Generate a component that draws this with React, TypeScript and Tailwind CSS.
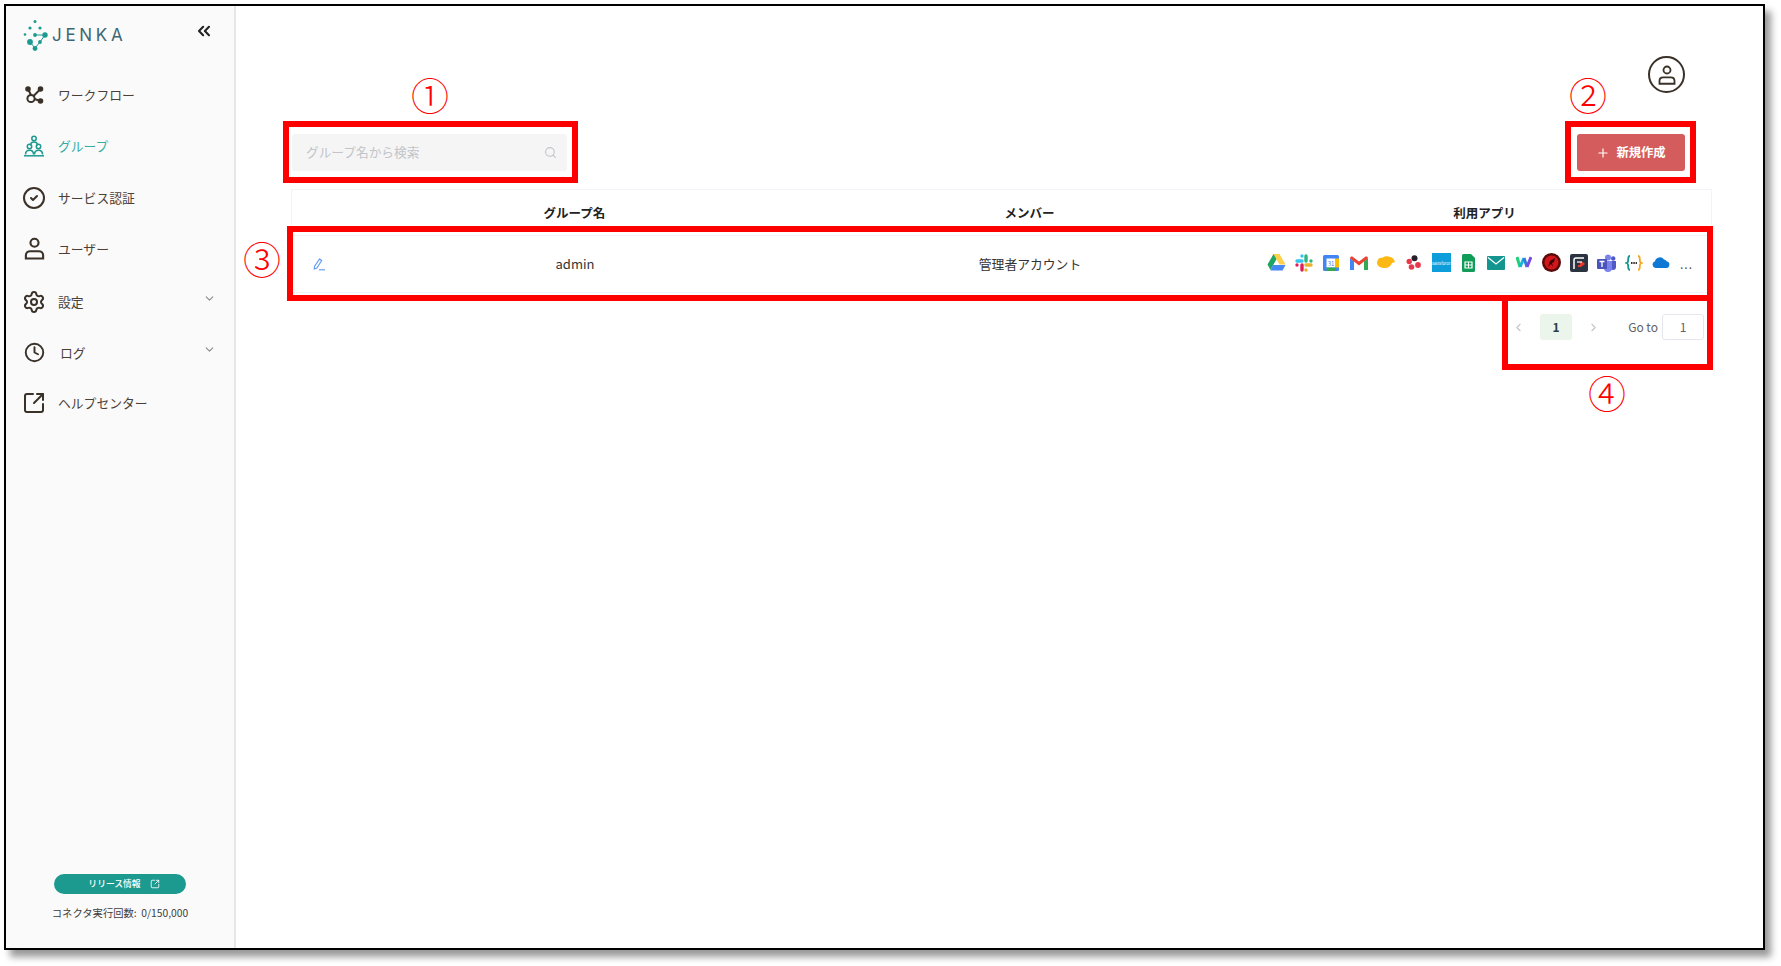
import { ChevronDown, ChevronLeft, ChevronRight, ChevronsLeft, CircleCheck, Clock, Plus, Search, Settings, SquareArrowOutUpRight } from "lucide-react";

const font = "font-['Noto_Sans_CJK_JP','Noto_Sans',sans-serif]";

function Logo() {
  return (
    <svg width="26" height="33" viewBox="-2 0 26 33" fill="#1c9a90">
      <path d="M5 22l5 6 5-6 5-7H10" stroke="#1c9a90" strokeWidth="1" fill="none" />
      <circle cx="10" cy="1.500" r="1.500" />
      <circle cx="5" cy="8" r="1.600" />
      <circle cx="15" cy="8" r="1.600" />
      <circle cx="0" cy="14.500" r="1.300" />
      <circle cx="10" cy="15" r="1.900" />
      <circle cx="20" cy="15" r="2.700" />
      <circle cx="5" cy="22" r="2.900" />
      <circle cx="15" cy="22" r="1.900" />
      <circle cx="10" cy="28.500" r="2.400" />
    </svg>
  );
}

function WorkflowIcon() {
  return (
    <svg width="20" height="20" viewBox="0 0 20 20" fill="none" stroke="#3a3128" strokeWidth="2">
      <circle cx="7" cy="13.500" r="3.600" />
      <circle cx="4" cy="4" r="1.800" fill="#3a3128" />
      <circle cx="16.500" cy="4" r="1.800" fill="#3a3128" />
      <circle cx="16.500" cy="16" r="1.800" fill="#3a3128" />
      <path d="M4 4l3 6M16.500 4l-7 7M10.500 14l6 2" />
    </svg>
  );
}

function GroupIcon() {
  return (
    <svg width="22" height="22" viewBox="0 0 22 22" fill="none" stroke="#1c9a90" strokeWidth="1.500">
      <circle cx="11" cy="3.500" r="2.200" />
      <path d="M7.500 10.500c0-2.500 1.500-3.600 3.500-3.600s3.500 1.100 3.500 3.600" />
      <circle cx="6.500" cy="11.500" r="2.200" />
      <circle cx="15.500" cy="11.500" r="2.200" />
      <path d="M2.500 19.500c0-3 1.600-4.300 4-4.300s4 1.300 4 4.300M11.500 19.500c0-3 1.600-4.300 4-4.300s4 1.300 4 4.300" />
      <path d="M1 20.800h20" />
    </svg>
  );
}

function UserIcon({ size = 23 }: { size?: number }) {
  return (
    <svg width={size} height={size} viewBox="0 0 22 24" fill="none" stroke="#3a3128" strokeWidth="2.200">
      <circle cx="11" cy="6" r="4.200" />
      <path d="M2 22.500v-3.500c0-2.500 2-4.200 4.500-4.200h9c2.500 0 4.500 1.700 4.500 4.200v3.500z" />
    </svg>
  );
}

function EditIcon() {
  return (
    <svg width="13" height="13" viewBox="0 0 13 13" fill="none" stroke="#5c98f2" strokeWidth="1.100">
      <path d="M6.500 1l2.200 1.500-4.800 7.500-2.700 1 .4-2.900z" />
      <path d="M6 11.800h6" />
    </svg>
  );
}

function NavItem({ icon, label, active, more, labelClass, className }: { icon: React.ReactNode; label: string; active?: boolean; more?: boolean; labelClass?: string; className?: string }) {
  return (
    <div className={`flex h-[51px] items-center pl-[16px] pr-[18px] ${className ?? ""}`}>
      <div className="flex h-[24px] w-[24px] items-center justify-center">{icon}</div>
      <span className={`text-[12.800px] ${labelClass ?? "ml-[12px]"} ${active ? "text-[#36ada3]" : "text-[#4a4038]"}`}>{label}</span>
      {more && <ChevronDown className="ml-auto mb-[7px] h-[13px] w-[13px] text-[#8a8a8a]" />}
    </div>
  );
}

const appIcons = [
  // drive
  <svg width="19" height="17" viewBox="0 0 19 17"><path d="M6.500 0h6l-6 10.500-3 5.500L.5 10.500z" fill="#1fa463" /><path d="M6.500 0h6l6 10.500h-6z" fill="#ffd04b" /><path d="M6 11h12.500l-3 5.500h-12z" fill="#4688f4" /></svg>,
  // slack
  <svg width="18" height="18" viewBox="0 0 18 18" strokeWidth="3.400" strokeLinecap="round"><path d="M7 2v0M7 7H2" stroke="#36c5f0" /><path d="M16 7v0M11 7V2" stroke="#2eb67d" /><path d="M11 16v0M11 11h5" stroke="#ecb22e" /><path d="M2 11v0M7 11v5" stroke="#e01e5a" /></svg>,
  // calendar
  <svg width="16" height="16" viewBox="0 0 16 16"><rect width="16" height="16" rx="1.500" fill="#4285f4" /><rect x="3.500" y="3.500" width="9" height="9" fill="#fff" /><path d="M12.500 3.500H16v9h-3.500z" fill="#fbbc04" /><path d="M3.500 12.500h9V16h-9z" fill="#34a853" /><text x="8" y="10.500" fontSize="6" textAnchor="middle" fill="#4285f4">31</text></svg>,
  // gmail
  <svg width="18" height="14" viewBox="0 0 18 14"><path d="M0 2.500V14h4V5z" fill="#4285f4" /><path d="M18 2.500V14h-4V5z" fill="#34a853" /><path d="M0 2.500C0 .5 2 0 3 1l6 4.500L15 1c1-1 3-.5 3 1.500L14 5.500 9 9.500l-5-4z" fill="#ea4335" /></svg>,
  // yellow blob
  <svg width="18" height="13" viewBox="0 0 18 13"><path d="M0 7c0-4 3-6 5-5 2-2 6-2 8-1 2 0 4 2 4 3l1 2-3 1c-1 3-4 5-7 5-4 0-8-2-8-5z" fill="#fdb813" /></svg>,
  // dots
  <svg width="15" height="15" viewBox="0 0 15 15"><circle cx="8.500" cy="3.200" r="3" fill="#2a1f2d" /><circle cx="3.200" cy="6.500" r="2.700" fill="#e8384f" /><circle cx="12" cy="10" r="2.900" fill="#e8384f" /><circle cx="5.500" cy="12" r="2.800" fill="#e8384f" /></svg>,
  // salesforce square
  <div className="flex h-[19px] w-[19px] items-center justify-center overflow-hidden bg-[#0d9dda] text-[4px] leading-none text-white">salesforce</div>,
  // sheets
  <svg width="13" height="18" viewBox="0 0 13 18"><path d="M1.500 0H9l4 4v12.500a1.500 1.500 0 0 1-1.500 1.500h-10A1.500 1.500 0 0 1 0 16.500v-15A1.500 1.500 0 0 1 1.500 0z" fill="#0f9d58" /><path d="M3 8h7v6H3z" fill="none" stroke="#fff" strokeWidth="1.200" /><path d="M6.500 8v6M3 11h7" stroke="#fff" /></svg>,
  // mail
  <svg width="18" height="14" viewBox="0 0 18 14"><rect width="18" height="14" rx="1" fill="#12968f" /><path d="M1 1.500l8 6.500 8-6.500" fill="none" stroke="#fff" strokeWidth="1.200" /></svg>,
  // w
  <svg width="16" height="13" viewBox="0 0 16 13" fill="none" strokeWidth="3"><path d="M1 1l3 10" stroke="#1fd17a" /><path d="M4 11l4-9" stroke="#17b3d8" /><path d="M8 2l3 9" stroke="#2f7de1" /><path d="M11 11l4-10" stroke="#7a4be0" /></svg>,
  // red circle
  <svg width="19" height="19" viewBox="0 0 19 19"><circle cx="9.500" cy="9.500" r="9.500" fill="#5a0a0a" /><circle cx="9.500" cy="9.500" r="7" fill="#d3161c" /><path d="M6 14l2-6 5-3-1 4-2 1 1 4-2-3z" fill="#3a0505" /></svg>,
  // dark square
  <svg width="18" height="18" viewBox="0 0 18 18"><rect width="18" height="18" rx="2" fill="#2b3340" /><path d="M14 4H6a2 2 0 0 0-2 2v9" fill="none" stroke="#fff" strokeWidth="1.500" /><path d="M8 13h3l4-3-2-2h-3v3H8z" fill="#e23a2e" /><path d="M7 8h5" stroke="#fff" strokeWidth="1.200" /></svg>,
  // teams
  <svg width="19" height="18" viewBox="0 0 19 18"><circle cx="11" cy="3.500" r="3" fill="#7b83eb" /><circle cx="16.200" cy="4.500" r="2.200" fill="#5059c9" /><path d="M13 7h6v6a3 3 0 0 1-6 0z" fill="#5059c9" /><path d="M5 7h10v7a4 4 0 0 1-8 0z" fill="#7b83eb" /><rect y="5" width="10" height="10" rx="1" fill="#4b53bc" /><path d="M2.500 7.500h5M5 7.500V13" stroke="#fff" strokeWidth="1.300" /></svg>,
  // json
  <svg width="18" height="16" viewBox="0 0 18 16" fill="none" strokeWidth="1.800"><path d="M5 1C2.500 1 3.500 4 3 6.500 2.800 7.500 1.500 8 1.500 8s1.300.5 1.500 1.500C3.500 12 2.500 15 5 15" stroke="#12968f" /><path d="M13 1c2.500 0 1.500 3 2 5.500.2 1 1.500 1.500 1.500 1.500s-1.300.5-1.500 1.500c-.5 2.500.5 5.500-2 5.500" stroke="#f5a623" /><path d="M6 8h6" stroke="#333" strokeDasharray="1.500 .8" /></svg>,
  // onedrive
  <svg width="18" height="11" viewBox="0 0 18 11"><path d="M3.500 11A3.500 3.500 0 0 1 3 4.200 5 5 0 0 1 12 2.500a3.800 3.800 0 0 1 2.600 1.800A3.400 3.400 0 0 1 14.500 11z" fill="#0f78d4" /></svg>,
];

function AppIcons() {
  return (
    <div className="mb-[3px] flex items-center">
      {appIcons.map((icon, i) => (
        <div key={i} className="flex h-[20px] w-[27.500px] items-center justify-center">
          {icon}
        </div>
      ))}
      <span className="ml-[5px] mt-[3px] text-[12px] leading-none tracking-[1px] text-[#555]">...</span>
    </div>
  );
}

function RedBox({ className }: { className: string }) {
  return <div className={`pointer-events-none absolute border-[6px] border-[#ff0000] ${className}`} />;
}

function Num({ n, className }: { n: string; className: string }) {
  return (
    <span className={`absolute flex h-[38px] w-[38px] items-center justify-center text-[38px] font-extralight leading-none text-[#ff0000] ${className}`}>{n}</span>
  );
}

export default function App() {
  return (
    <div className={`relative h-[966px] w-[1781px] overflow-hidden bg-white ${font}`}>
      <div className="ml-[4px] mt-[4px] flex h-[946px] w-[1761px] border-2 border-black bg-white shadow-[6px_7px_7px_rgba(0,0,0,0.4)]">
        {/* Sidebar */}
        <aside className="flex w-[230px] shrink-0 flex-col border-r-2 border-[#e6e6e6] bg-[#fafafa]">
          <div className="flex items-start pl-[17px] pr-[20px] pt-[14px]">
            <Logo />
            <span className="ml-[3px] mt-[4px] font-['Inter',sans-serif] text-[17px] leading-[22px] tracking-[3.700px] text-[#3f6672]">JENKA</span>
            <ChevronsLeft className="ml-auto mt-[1px] h-[20px] w-[20px] text-[#222]" strokeWidth={2.500} />
          </div>
          <nav className="mt-[16px] flex flex-col">
            <NavItem icon={<WorkflowIcon />} label="ワークフロー" />
            <NavItem icon={<GroupIcon />} label="グループ" active />
            <NavItem icon={<CircleCheck className="h-[24px] w-[24px] text-[#3a3128]" strokeWidth={2} />} label="サービス認証" className="mt-[1px]" />
            <NavItem icon={<UserIcon />} label="ユーザー" />
            <NavItem icon={<Settings className="h-[24px] w-[24px] text-[#3a3128]" strokeWidth={2} />} label="設定" more className="mt-[2px]" />
            <NavItem icon={<Clock className="h-[21px] w-[21px] text-[#3a3128]" strokeWidth={2.200} />} label="ログ" more labelClass="ml-[14px]" />
            <NavItem icon={<SquareArrowOutUpRight className="h-[24px] w-[24px] text-[#3a3128]" strokeWidth={2} />} label="ヘルプセンター" className="mt-[-1px]" />
          </nav>
          <div className="mt-auto flex flex-col items-center pb-[28px]">
            <div className="flex h-[20px] w-[132px] items-center justify-center gap-[9px] rounded-full bg-[#1c9a90] pl-[8px] text-[8.800px] font-medium text-white">
              リリース情報
              <SquareArrowOutUpRight className="h-[10px] w-[10px]" />
            </div>
            <div className="mt-[11px] text-[10.300px] text-[#3d3d3d]">コネクタ実行回数:&nbsp; 0/150,000</div>
          </div>
        </aside>

        {/* Main */}
        <main className="flex-1 pl-[55px] pr-[51px] pt-[50px]">
          <div className="flex justify-end pr-[27px]">
            <div className="flex h-[37px] w-[37px] items-center justify-center rounded-full border-2 border-[#3a3128]">
              <UserIcon size={20} />
            </div>
          </div>
          <div className="mt-[41px] flex items-center justify-between pl-[1px] pr-[27px]">
            <div className="flex h-[37px] w-[275px] items-center justify-between rounded-[3px] bg-[#f5f5f5] pb-[1px] pl-[14px] pr-[10px] text-[12.700px] text-[#c2c4c9]">
              グループ名から検索
              <Search className="h-[13px] w-[13px] text-[#c2c4c9]" />
            </div>
            <div className="flex h-[37px] w-[108px] items-center justify-center gap-[6px] rounded-[3px] bg-[#d45c5c] text-[12.300px] font-bold text-white">
              <Plus className="h-[14px] w-[14px]" />
              新規作成
            </div>
          </div>

          <div className="mt-[18px] border border-[#f2f2f8]">
            <div className="grid h-[45px] grid-cols-[1fr_455px_455px_455px] items-center pt-[1px] text-[12.500px] font-bold text-[#222]">
              <div className="w-0" />
              <div className="pl-[2px] text-center">グループ名</div>
              <div className="pl-[2px] text-center">メンバー</div>
              <div className="pl-[2px] text-center">利用アプリ</div>
            </div>
            <div className="grid h-[57px] grid-cols-[1fr_455px_455px_455px] items-center border-t border-[#f2f2f8] text-[13px] text-[#333]">
              <div className="pl-[21px]">
                <EditIcon />
              </div>
              <div className="pl-[3px] text-center">admin</div>
              <div className="pl-[3px] text-center text-[12.800px]">管理者アカウント</div>
              <div className="flex justify-end pr-[18px]">
                <AppIcons />
              </div>
            </div>
          </div>

          <div className="mt-[21px] flex items-center justify-end pr-[8px] text-[12px] text-[#606266]">
            <ChevronLeft className="h-[13px] w-[13px] text-[#c0c4cc]" />
            <div className="ml-[15px] flex h-[26px] w-[32px] items-center justify-center rounded-[3px] bg-[#ecf5ec] font-bold text-[#2f3d4a]">1</div>
            <ChevronRight className="ml-[15px] h-[13px] w-[13px] text-[#c0c4cc]" />
            <span className="ml-[28px]">Go to</span>
            <div className="ml-[4px] flex h-[26px] w-[42px] items-center justify-center rounded-[3px] border border-[#e4e7ed]">1</div>
          </div>
        </main>
      </div>

      {/* Annotations */}
      <RedBox className="left-[283px] top-[121px] h-[62px] w-[295px]" />
      <RedBox className="left-[1565px] top-[121px] h-[62px] w-[131px]" />
      <RedBox className="left-[287px] top-[226px] h-[75px] w-[1426px]" />
      <RedBox className="left-[1502px] top-[295px] h-[75px] w-[211px]" />
      <Num n="①" className="left-[411px] top-[75px]" />
      <Num n="②" className="left-[1569px] top-[75px]" />
      <Num n="③" className="left-[243px] top-[239px]" />
      <Num n="④" className="left-[1588px] top-[373px]" />
    </div>
  );
}
